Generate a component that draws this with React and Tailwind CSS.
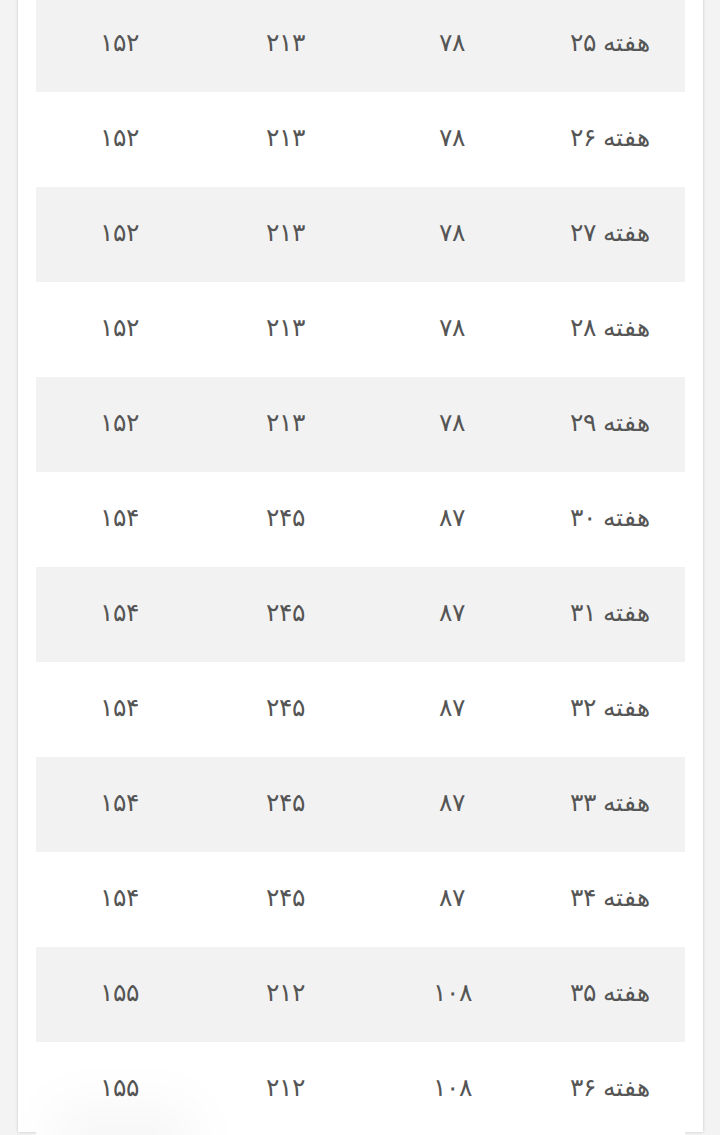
const rows = [
  { week: "هفته ۲۵", a: "۷۸", b: "۲۱۳", c: "۱۵۲" },
  { week: "هفته ۲۶", a: "۷۸", b: "۲۱۳", c: "۱۵۲" },
  { week: "هفته ۲۷", a: "۷۸", b: "۲۱۳", c: "۱۵۲" },
  { week: "هفته ۲۸", a: "۷۸", b: "۲۱۳", c: "۱۵۲" },
  { week: "هفته ۲۹", a: "۷۸", b: "۲۱۳", c: "۱۵۲" },
  { week: "هفته ۳۰", a: "۸۷", b: "۲۴۵", c: "۱۵۴" },
  { week: "هفته ۳۱", a: "۸۷", b: "۲۴۵", c: "۱۵۴" },
  { week: "هفته ۳۲", a: "۸۷", b: "۲۴۵", c: "۱۵۴" },
  { week: "هفته ۳۳", a: "۸۷", b: "۲۴۵", c: "۱۵۴" },
  { week: "هفته ۳۴", a: "۸۷", b: "۲۴۵", c: "۱۵۴" },
  { week: "هفته ۳۵", a: "۱۰۸", b: "۲۱۲", c: "۱۵۵" },
  { week: "هفته ۳۶", a: "۱۰۸", b: "۲۱۲", c: "۱۵۵" },
];

export default function App() {
  return (
    <div className="h-[1135px] overflow-hidden bg-[#f3f3f3] font-['DejaVu_Sans',sans-serif]">
      <div className="relative ml-[18px] mr-[17px] h-full bg-white px-[18px] shadow-[0_0_3px_rgba(0,0,0,0.18)]">
        {/* weekly table, scrolled part */}
        <div dir="rtl" className="-mt-[3px] text-[#555]">
          {rows.map((row, i) => (
            <div
              key={i}
              className={`grid h-[95px] grid-cols-[150px_166px_168px_164px] items-center text-center text-[25px] font-light ${
                i % 2 === 0 ? "bg-[#f2f2f2]" : "bg-white"
              }`}
            >
              <div className="-mt-[4px]">{row.week}</div>
              <div className="-mt-[4px]">{row.a}</div>
              <div className="-mt-[4px]">{row.b}</div>
              <div className="-mt-[4px]">{row.c}</div>
            </div>
          ))}
        </div>
        <div className="absolute bottom-[-40px] left-[30px] h-[70px] w-[150px] rounded-full bg-black/[0.03] blur-xl"></div>
      </div>
    </div>
  );
}
